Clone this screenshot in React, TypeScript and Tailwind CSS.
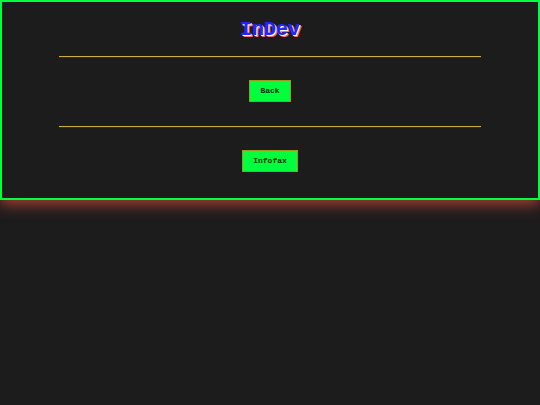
export default function App() {
  const mono = { fontFamily: '"Liberation Mono", "Courier New", monospace' };

  const button = (label: string) => (
    <button
      className="block h-[22px] px-[10px] bg-[#00ff3c] border border-[#9a9a1a] text-[8px] font-bold text-[#0b2a0b] leading-none"
      style={mono}
    >
      {label}
    </button>
  );

  return (
    <div className="min-h-[405px] w-full bg-[#1c1c1c]" style={mono}>
      <div className="h-[200px] border-2 border-[#00ff3c] bg-[#1c1c1c] shadow-[0_4px_14px_rgba(220,80,60,0.75)] flex flex-col items-center">
        <h1
          className="mt-[16px] text-[20px] leading-[24px] font-bold text-[#2424ff] [text-shadow:1px_1px_0_#ffffff,2px_2px_0_#ff7070]"
          style={mono}
        >
          InDev
        </h1>
        <hr className="mt-[14px] w-[422px] border-0 border-t border-[#cdae3c] shadow-[0_1px_0_#3a2a00]" />
        <div className="mt-[23px] flex">{button('Back')}</div>
        <hr className="mt-[24px] w-[422px] border-0 border-t border-[#cdae3c] shadow-[0_1px_0_#3a2a00]" />
        <div className="mt-[23px] flex">{button('Infofax')}</div>
      </div>
    </div>
  );
}
